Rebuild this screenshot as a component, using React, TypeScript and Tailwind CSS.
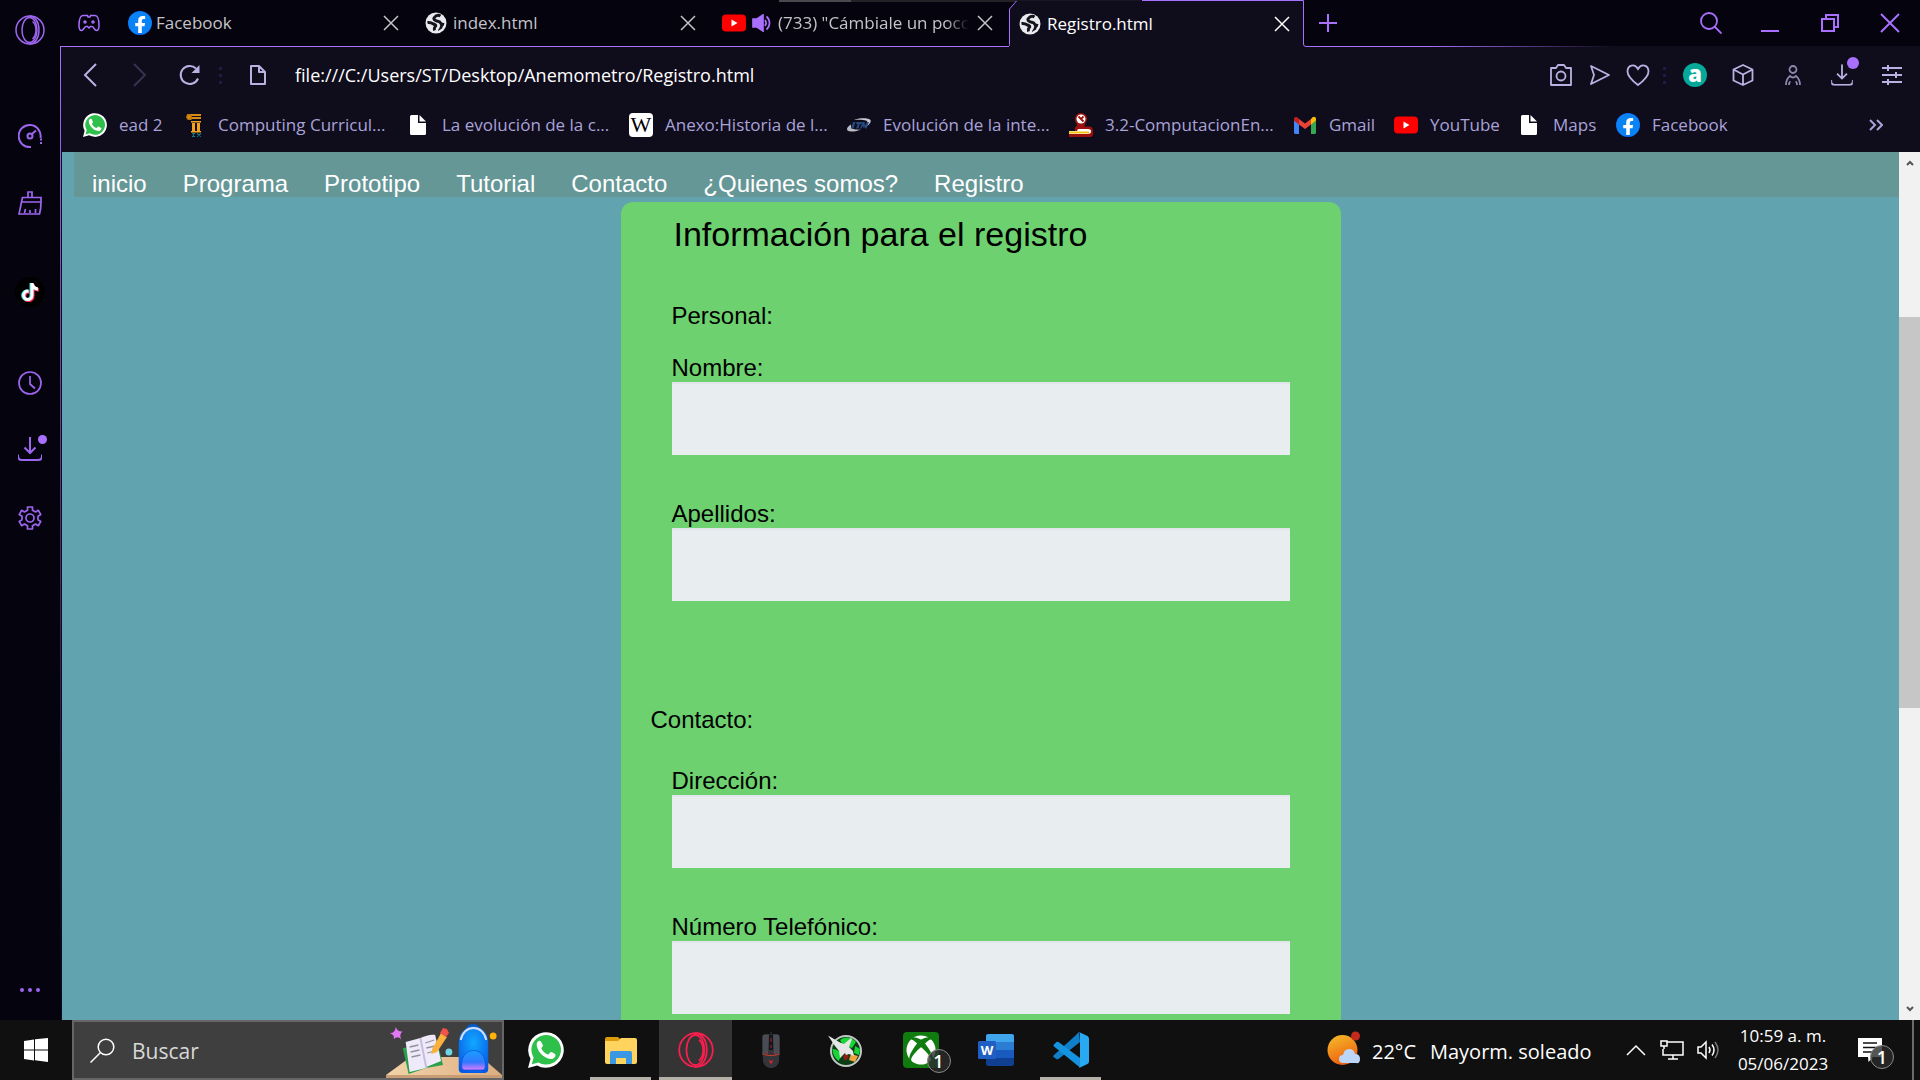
import React from "react";
import { FaFacebook, FaTiktok, FaXbox } from "react-icons/fa";

type IconProps = { className?: string };

function Line({ className = "", children, w = 24, h = 24, sw = 2 }: { className?: string; children: React.ReactNode; w?: number; h?: number; sw?: number }) {
  return (
    <svg width={w} height={h} viewBox={`0 0 ${w} ${h}`} fill="none" stroke="currentColor" strokeWidth={sw} className={`shrink-0 ${className}`} aria-hidden="true">
      {children}
    </svg>
  );
}

/* ---------- site icons ---------- */

function FacebookIcon() {
  return (
    <span className="grid size-6 shrink-0 place-items-center rounded-full bg-[radial-gradient(circle,#ffffff_60%,#0866ff_62%)]">
      <FaFacebook className="size-6 text-[#0a84f5]" />
    </span>
  );
}

function GlobeIcon() {
  return (
    <svg width="22" height="22" viewBox="0 0 22 22" className="shrink-0" aria-hidden="true">
      <circle cx="11" cy="11" r="10.500" fill="#e8eaed" />
      <path d="M10 4.500c2-1.500 4-1.500 5.500-.5M10.500 4.500C8 6 8.500 7.500 10.500 8.500s4.500.5 5 2.500c.5 1.500 2 1 3.500 1.500M2.500 10.500c3-.5 4.500.5 6 1.500 2.500 1 3 1.500 1.500 3-1 1-1 2-.5 3.500" fill="none" stroke="#15131c" strokeWidth="3" strokeLinejoin="round" />
      <path d="M15 12l4-.5-2 5-4 2.500c0-2 3-4 2-7z" fill="#15131c" />
    </svg>
  );
}

function YoutubeIcon() {
  return (
    <svg width="24" height="24" viewBox="0 0 24 24" className="shrink-0" aria-hidden="true">
      <rect x="0" y="3.500" width="24" height="17" rx="4" fill="#ff0000" />
      <path d="M9.500 8.500v7l6-3.500z" fill="#fff" />
    </svg>
  );
}

function WhatsappIcon({ size = "size-6" }: { size?: string }) {
  return (
    <span className={`relative grid shrink-0 place-items-center ${size}`}>
      <svg viewBox="0 0 36 36" className="size-full" aria-hidden="true">
        <path d="M0 36l2.500-9.200A17.800 17.800 0 1 1 9.200 33.500z" fill="#fff" />
        <path d="M3.800 32.200l1.800-6.600A14.800 14.800 0 1 1 10.400 30.400z" fill="#2fc04c" />
        <path d="M13 9.500c-.6-.9-1.300-.9-2-.7-1.500.6-2.700 2.500-2.200 5.200 1 5.500 7 12.500 14 13 3 0 4.800-1.800 4.700-4.300-.2-.8-4-2.700-4.800-2.600-.8.200-1.700 2.300-2.400 2.400-2.500-.3-6.200-3.800-6.900-6.300.2-.8 1.700-1.700 1.600-2.600z" fill="#fff" />
      </svg>
    </span>
  );
}

function PageIcon() {
  return (
    <svg width="24" height="24" viewBox="0 0 24 24" className="shrink-0" aria-hidden="true">
      <path d="M4 3.500a1.500 1.500 0 0 1 1.500-1.500H12v8h8v10.500a1.500 1.500 0 0 1-1.500 1.500h-13A1.500 1.500 0 0 1 4 20.500zM13.500 2L20 8.500h-6.500z" fill="#fff" />
    </svg>
  );
}

function ColumnIcon() {
  return (
    <svg width="24" height="24" viewBox="0 0 24 24" className="shrink-0" aria-hidden="true">
      <path d="M5 1h14v2H9v1h10v2H10l-1 1H6L5 5z" fill="#d98a10" />
      <circle cx="7" cy="4" r="2.500" fill="none" stroke="#b36b08" strokeWidth="1" />
      <path d="M9 8h10v1.500H9zM10 10h3v8h-3zM15 10h3v8h-3zM9 18h10v1.500H9z" fill="#f5a31a" />
      <path d="M10 20.500h3M11.500 20.500v3M10 23.500h3M15 20.500l4 3M19 20.500l-4 3" stroke="#0f7f86" strokeWidth="1.200" />
    </svg>
  );
}

function WikipediaIcon() {
  return <span className="grid size-6 shrink-0 place-items-center rounded bg-white font-['Liberation_Serif',serif] text-[22px] leading-6 text-black">W</span>;
}

function ItmIcon() {
  return (
    <svg width="24" height="24" viewBox="0 0 24 24" className="shrink-0" aria-hidden="true">
      <path d="M7 7C12 4.500 22 5 23.500 7c1 3-2.500 6-6 7.500C20 11 21.500 8.500 19 7.500 16 6.500 11 6.500 7 7z" fill="#c9cbd0" />
      <path d="M4 11.500c-3 2-5 4-3.500 6 3 2 9 1 13.500-1C9 17 4.500 16 4 14.500z" fill="#b9bcc3" />
      <path d="M6 9h2.500l-2 6.500H4zM9.500 9H15l-.5 2h-1.700l-1.300 4.500H9.200l1.300-4.500H9zM15.500 9h2l.5 3.500L20 9h2l-2.500 6.500H18l.5-3-1.500 2h-1l-.5-2-1 3h-1.500z" fill="#254a80" />
    </svg>
  );
}

function StampIcon() {
  return (
    <svg width="24" height="24" viewBox="0 0 24 24" className="shrink-0" aria-hidden="true">
      <path d="M11.500 0c4.500 0 7 3 6.500 6.500-.5 3-2.500 4-2.500 7h5c2.500 0 3.500 2 3.500 4.500v3c0 2-1 3-3 3H0v-5h6V14.500l2-2c0-2-2-3.500-2-6C6 3 8 0 11.500 0z" fill="#9c100f" />
      <circle cx="12" cy="6" r="4.500" fill="#fff" />
      <path d="M9 16h10c2.500 0 3 1 3 2.500S21 21 19 21H0v-3h8z" fill="#fff" />
      <path d="M9.500 3.500l5 5M14.500 3.500L12 6" stroke="#9c100f" strokeWidth="1.800" />
      <path d="M0 19.500h20" stroke="#f4c20d" strokeWidth="2" />
    </svg>
  );
}

function GmailIcon() {
  return (
    <svg width="24" height="24" viewBox="0 0 24 24" className="shrink-0" aria-hidden="true">
      <path d="M1 7v12.500c0 .8.700 1.500 1.500 1.500H6V11z" fill="#4285f4" />
      <path d="M18 11v10h3.500c.8 0 1.500-.7 1.500-1.500V7z" fill="#34a853" />
      <path d="M18 6v5.500l5-4V6c0-2.200-2-3-3.500-1.800z" fill="#fbbc04" />
      <path d="M6 11.500V6l6 4.500L18 6v5.500L12 16z" fill="#ea4335" />
      <path d="M1 6v1.500l5 4V6L4.500 4.500C3 3.300 1 4 1 6z" fill="#c5221f" />
    </svg>
  );
}

/* ---------- browser outline icons ---------- */

function OperaIcon({ className = "" }: IconProps) {
  return (
    <svg viewBox="0 0 30 30" fill="none" stroke="currentColor" strokeWidth="1.500" className={`shrink-0 ${className}`} aria-hidden="true">
      <circle cx="15" cy="15" r="14" />
      <ellipse cx="14.500" cy="15" rx="7.500" ry="12.500" />
      <path d="M14 1c6 0 10 6 10 14s-4 14-10 14M17.500 6.500c2.500 2 3.500 5 3.500 8.500s-1 6.500-3.500 9" />
    </svg>
  );
}

function DownloadIcon({ className = "" }: IconProps) {
  return (
    <Line className={className}>
      <path d="M12 0v16M6.500 10.500L12 16l5.500-5.500M0 17.500v1.500c0 3 2 4 4 4h16c2 0 4-1 4-4v-1.500" />
    </Line>
  );
}

function CloseIcon({ className = "" }: IconProps) {
  return (
    <Line w={16} h={16} sw={1.5} className={className}>
      <path d="M1 1l14 14M15 1L1 15" />
    </Line>
  );
}

function Dots() {
  return (
    <span className="flex w-[3px] shrink-0 flex-col gap-1" aria-hidden="true">
      <i className="size-[3px] bg-[#211a45]" />
      <i className="size-[3px] bg-[#211a45]" />
      <i className="size-[3px] bg-[#211a45]" />
    </span>
  );
}

function Sidebar() {
  return (
    <aside className="flex w-[60px] shrink-0 flex-col items-center bg-[#05030d] pt-[15px] text-[#9d66f0]">
      <button aria-label="Opera GX"><OperaIcon className="size-[30px]" /></button>
      <button aria-label="GX Control" className="mt-[79px]">
        <Line>
          <path d="M13 23A11 11 0 1 1 22.500 14" />
          <circle cx="12" cy="12" r="2.500" />
          <path d="M14 10l4-3.500M22 15.500h2M22 19h2" />
        </Line>
      </button>
      <button aria-label="GX Cleaner" className="mt-[43px]">
        <Line sw={1.7}>
          <path d="M10 6.500V1h4v5.500M4.500 6.500h18.500v4.500H3.500zM3.500 11L1 23h20.500q1.500-5 1.500-12M6.500 22l1-4M12 22v-3M17.500 22v-4" />
        </Line>
      </button>
      <button aria-label="TikTok" className="mt-[62px] grid size-[30px] place-items-center rounded-full bg-black">
        <FaTiktok className="size-[18px] text-white [filter:drop-shadow(-1px_0_0_#22e6e0)_drop-shadow(1px_1px_0_#ff2850)]" />
      </button>
      <button aria-label="Historial" className="mt-[64px]">
        <Line sw={1.7}><circle cx="12" cy="12" r="11" /><path d="M12 5v8l5 4.500" /></Line>
      </button>
      <button aria-label="Descargas" className="relative mt-[42px]">
        <DownloadIcon />
        <i className="absolute -top-[2px] -right-[5px] size-[9px] rounded-full bg-[#a970ff]" />
      </button>
      <button aria-label="Configuración" className="mt-[45px]">
        <Line sw={1.7}>
          <circle cx="12" cy="12" r="4" />
          <path d="M9.500 1h5v3.200l3 1.700 2.800-1.600 2.500 4.300L20 10.300v3.400l2.800 1.700-2.500 4.300-2.800-1.600-3 1.700V23h-5v-3.200l-3-1.700-2.800 1.600-2.500-4.300L4 13.700v-3.400L1.200 8.600l2.500-4.300 2.800 1.600 3-1.700z" strokeLinejoin="round" />
        </Line>
      </button>
      <button aria-label="Más" className="mt-auto mb-7 flex gap-1">
        <i className="size-1 rounded-full bg-current" />
        <i className="size-1 rounded-full bg-current" />
        <i className="size-1 rounded-full bg-current" />
      </button>
    </aside>
  );
}

function Tab({ title, icon, audio, active }: { title: string; icon: React.ReactNode; audio?: boolean; active?: boolean }) {
  return (
    <div className={`relative flex w-[297px] shrink-0 items-center pr-4 pl-[10px] ${active ? "text-white" : "border-b border-[#a970ff] text-[#c4c3c9]"}`}>
      {active && (
        <svg className="absolute inset-0 size-full" viewBox="0 0 297 47" preserveAspectRatio="none" fill="none" aria-hidden="true">
          <path d="M.5 47V9l8-8.500h286.500V47z" fill="#0f0c1c" />
          <path d="M-1 46.500q1.500 0 1.500-2V9l7-8M133 .5h161.500V44q0 2.500 2.500 2.500" stroke="#a970ff" />
        </svg>
      )}
      <span className="relative flex w-6 shrink-0">{icon}</span>
      {audio && (
        <svg width="20" height="18" viewBox="0 0 20 18" className="ml-[6px] shrink-0" fill="none" stroke="#a970ff" strokeWidth="1.700" aria-hidden="true">
          <path d="M1 5h4l6-4v16l-6-4H1z" fill="#a970ff" />
          <path d="M13 6c1.500 2 1.500 4 0 6M14.500 2.500c4 3.500 4 9.500 0 13" />
        </svg>
      )}
      <button className={`relative min-w-0 flex-1 overflow-hidden text-left whitespace-nowrap ${audio ? "ml-[6px] [mask-image:linear-gradient(to_right,#000_88%,transparent)]" : "ml-1"}`}>{title}</button>
      <button aria-label={`Cerrar ${title}`} className="relative ml-2"><CloseIcon /></button>
    </div>
  );
}

function TabBar() {
  return (
    <div className="relative flex h-[47px] shrink-0 bg-[#05030d] text-[17px]">
      <div className="absolute top-0 left-[719px] flex h-[2px] w-[362px]"><i className="w-[72px] bg-[#4a494d]" /><i className="flex-1 bg-[#222126]" /></div>
      <div className="flex w-[58px] shrink-0 items-center border-b border-[#a970ff] pl-[18px] text-[#a970ff]">
        <button aria-label="GX Corner">
          <Line w={22} h={18} sw={1.5}>
            <path d="M5 1.500h4.500L10 3h2l.5-1.500H17c3 0 4 5 4 10 0 3-1 5-2.500 5-2 0-3-4-4.500-4h-1.500L11 14l-1.500-1.500H8c-1.500 0-2.500 4-4.500 4-1.500 0-2.500-2-2.500-5 0-5 1-10 4-10z" />
            <circle cx="7" cy="8" r="1" /><circle cx="15" cy="8" r="1" />
          </Line>
        </button>
      </div>
      <Tab title="Facebook" icon={<FacebookIcon />} />
      <Tab title="index.html" icon={<GlobeIcon />} />
      <Tab title={'(733) "Cámbiale un poco'} icon={<YoutubeIcon />} audio />
      <Tab title="Registro.html" icon={<GlobeIcon />} active />
      <div className="flex flex-1 items-center border-b border-transparent text-[#a970ff] [border-image:linear-gradient(to_right,#a970ff_20%,#0f0c1c_50%)_1]">
        <button aria-label="Nueva pestaña" className="ml-[13px]"><Line w={18} h={18}><path d="M9 0v18M0 9h18" /></Line></button>
        <button aria-label="Buscar pestañas" className="mr-[39px] ml-auto"><Line w={22} h={22} sw={1.8}><circle cx="9" cy="9" r="8" /><path d="M14.500 14.500l7 7" /></Line></button>
        <button aria-label="Minimizar" className="mr-[41px] pt-4"><Line w={18} h={2}><path d="M0 1h18" /></Line></button>
        <button aria-label="Restaurar" className="mr-[40px]"><Line w={20} h={20}><path d="M2 6h12v12H2zM6 6V2h12v12h-4" /></Line></button>
        <button aria-label="Cerrar" className="mr-[20px]"><Line w={20} h={20}><path d="M1 1l18 18M19 1L1 19" /></Line></button>
      </div>
    </div>
  );
}

function AddressBar() {
  return (
    <div className="flex h-14 shrink-0 items-center pr-[18px] pl-[22px] text-[#b8b2e2]">
      <button aria-label="Atrás"><Line w={14} h={24}><path d="M13 1L2 12l11 11" /></Line></button>
      <button aria-label="Adelante" className="ml-[36px] text-[#37334f]"><Line w={14} h={24}><path d="M1 1l11 11L1 23" /></Line></button>
      <button aria-label="Recargar" className="ml-[32px]">
        <Line w={22} h={22}><path d="M19 14.500A9 9 0 1 1 17 4.500" /><path d="M20.500 1v8h-8z" fill="currentColor" stroke="none" /></Line>
      </button>
      <span className="ml-[18px]"><Dots /></span>
      <span className="ml-[27px]"><Line w={18} h={22}><path d="M2 2h8l6 6v12H2zM10 2v6h6" strokeLinejoin="round" /></Line></span>
      <input aria-label="Dirección" defaultValue="file:///C:/Users/ST/Desktop/Anemometro/Registro.html" className="ml-[28px] min-w-0 flex-1 bg-transparent text-lg text-white outline-none" />
      <button aria-label="Instantánea"><Line w={24} h={24} sw={1.8}><path d="M2 5h5l2-3h6l2 3h5v17H2z" strokeLinejoin="round" /><circle cx="12" cy="13" r="4.500" /></Line></button>
      <button aria-label="Mi Flow" className="ml-4"><Line w={22} h={22} sw={1.8}><path d="M2 2l18 9-18 9 3-9z" strokeLinejoin="round" /></Line></button>
      <button aria-label="Marcadores" className="ml-[15px]"><Line w={24} h={24} sw={1.8}><path d="M12 22C8 19 1.500 14 1.500 8.500 1.500 2 8.500 0 12 6c3.500-6 10.500-4 10.500 2.500C22.500 14 16 19 12 22z" /></Line></button>
      <span className="ml-[13px]"><Dots /></span>
      <button aria-label="Alexa" className="ml-[17px] grid size-6 place-items-center rounded-full bg-[#05a899] text-[22px] leading-5 font-extrabold text-white"><span className="-mt-1">a</span></button>
      <button aria-label="Extensiones" className="ml-6"><Line w={24} h={24} sw={1.8}><path d="M12 2l9.500 4.500v11L12 22l-9.500-4.500v-11zM2.500 6.500L12 11.500l9.500-5M12 11.500V22" strokeLinejoin="round" /></Line></button>
      <button aria-label="Perfil" className="ml-[29px] text-[#8d88ae]"><Line w={18} h={20} sw={1.8}><circle cx="9" cy="4.500" r="3.500" /><path d="M2 20c0-5 1.500-7 4-9 2 2 4 2 6 0 2.500 2 4 4 4 9M5 20q0-3 1.500-3.500M13 20q0-3-1.500-3.500" /></Line></button>
      <button aria-label="Descargas" className="relative ml-[28px]">
        <DownloadIcon className="scale-90" />
        <i className="absolute -top-[6px] -right-[5px] size-3 rounded-full bg-[#a970ff]" />
      </button>
      <button aria-label="Configuración rápida" className="ml-[28px]"><Line w={20} h={20}><path d="M0 3h20M0 10h20M0 17h20M6 0v6M14 7v6M6 14v6" /></Line></button>
    </div>
  );
}

const bookmarks: { label: string; icon: React.ReactNode; width: string }[] = [
  { label: "ead 2", icon: <WhatsappIcon />, width: "w-[99px]" },
  { label: "Computing Curricul...", icon: <ColumnIcon />, width: "w-[224px]" },
  { label: "La evolución de la c...", icon: <PageIcon />, width: "w-[223px]" },
  { label: "Anexo:Historia de l...", icon: <WikipediaIcon />, width: "w-[218px]" },
  { label: "Evolución de la inte...", icon: <ItmIcon />, width: "w-[222px]" },
  { label: "3.2-ComputacionEn...", icon: <StampIcon />, width: "w-[224px]" },
  { label: "Gmail", icon: <GmailIcon />, width: "w-[101px]" },
  { label: "YouTube", icon: <YoutubeIcon />, width: "w-[123px]" },
  { label: "Maps", icon: <PageIcon />, width: "w-[99px]" },
  { label: "Facebook", icon: <FacebookIcon />, width: "w-[120px]" },
];

function BookmarksBar() {
  return (
    <nav aria-label="Marcadores" className="flex h-[49px] shrink-0 items-center pb-[6px] pl-[22px] text-[17px] text-[#a9a3d8]">
      {bookmarks.map((b) => (
        <a key={b.label} href="#" className={`flex shrink-0 items-center gap-3 whitespace-nowrap ${b.width}`}>
          {b.icon}
          {b.label}
        </a>
      ))}
      <button aria-label="Más marcadores" className="mr-[37px] ml-auto"><Line w={14} h={12}><path d="M1 1l5 5-5 5M8 1l5 5-5 5" /></Line></button>
    </nav>
  );
}

function Field({ id, label, className }: { id: string; label: string; className: string }) {
  return (
    <div className={`ml-[51px] flex flex-col ${className}`}>
      <label htmlFor={id}>{label}</label>
      <input id={id} type="text" className="mr-[51px] h-[73px] border-t-2 border-[#e2e5ea] bg-[#e8edf0] px-4 outline-none" />
    </div>
  );
}

function RegistroPage() {
  const links = ["inicio", "Programa", "Prototipo", "Tutorial", "Contacto", "¿Quienes somos?", "Registro"];
  return (
    <main className="min-w-0 flex-1 overflow-hidden bg-[#61a3ae] font-['Liberation_Sans',Arial,sans-serif] text-2xl leading-7">
      <nav className="ml-3 flex h-[45px] items-end gap-9 bg-[#659797] pl-[18px] text-white">
        {links.map((l) => <a key={l} href="#" className="-mb-px">{l}</a>)}
      </nav>
      <form className="mx-auto mt-[5px] w-[720px] rounded-t-xl bg-[#6dd170] pt-3 pb-16 text-black">
        <h1 className="pl-[53px] text-[34px] leading-10">Información para el registro</h1>
        <h2 className="mt-12 pl-[51px]">Personal:</h2>
        <Field id="nombre" label="Nombre:" className="mt-6" />
        <Field id="apellidos" label="Apellidos:" className="mt-[45px]" />
        <h2 className="mt-[105px] pl-[30px]">Contacto:</h2>
        <Field id="direccion" label="Dirección:" className="mt-[33px]" />
        <Field id="telefono" label="Número Telefónico:" className="mt-[45px]" />
      </form>
    </main>
  );
}

function Scrollbar() {
  return (
    <div className="flex w-[21px] shrink-0 flex-col items-center bg-[#f1f1f1] py-2 text-[#555]">
      <Line w={8} h={6}><path d="M1 5l3-3 3 3" /></Line>
      <div className="mt-[151px] h-[391px] w-full bg-[#c6c6c6]" />
      <Line w={8} h={6} className="mt-auto"><path d="M1 1l3 3 3-3" /></Line>
    </div>
  );
}

/* ---------- taskbar ---------- */

function SearchArt() {
  return (
    <svg width="116" height="58" viewBox="0 0 118 58" preserveAspectRatio="none" className="shrink-0" aria-hidden="true">
      <defs>
        <linearGradient id="desk" x1="0" x2="1"><stop offset="0" stopColor="#f3d3aa" /><stop offset="1" stopColor="#dcae80" /></linearGradient>
        <radialGradient id="bag" cx=".5" cy=".35" r=".7"><stop offset="0" stopColor="#12a8ff" /><stop offset="1" stopColor="#0559e6" /></radialGradient>
        <linearGradient id="pocket" x1="0" x2="0" y1="0" y2="1"><stop offset="0" stopColor="#199fff" /><stop offset=".6" stopColor="#3178ff" /><stop offset="1" stopColor="#e07bff" /></linearGradient>
      </defs>
      <path d="M25 36h72l21 18H0z" fill="url(#desk)" />
      <path d="M0 54h118v4H0z" fill="#c89c74" />
      <path d="M10 6q1.500 5 7 4.500-4 2.500-1.500 8Q12 14.500 8 18q1-4-4-6 5 .5 6-6z" fill="#e277f5" />
      <path d="M17 27l6 26 18-6 17-3-5-20z" fill="#2aa04a" />
      <path d="M20 21l15-4 6 30-17 4zM35 17c5-2 11-4 15-3l6 26-15 6z" fill="#efeafa" />
      <path d="M24 26l9-2M25 31l9-2M26 36l9-2M40 22l9-3M41 27l9-2M42 32l7-2" stroke="#93909f" strokeWidth="1.300" />
      <path d="M35 17l6 30" stroke="#c6bddb" strokeWidth="2" />
      <path d="M47 28L56 12l6 4-10 15-6 2z" fill="#f8b13a" />
      <path d="M55 12l3-5 4 1 2 4-3 4z" fill="#f25348" />
      <circle cx="64" cy="31" r="3.500" fill="#70d5e3" />
      <circle cx="109" cy="15" r="3.500" fill="#ffb20a" />
      <path d="M83 8c0-5 11-5 11 0" stroke="#0756b9" strokeWidth="3" fill="none" />
      <path d="M74 22c0-22 30-22 30 0v26q0 4-4 4H78q-4 0-4-4z" fill="url(#bag)" />
      <path d="M76 19c3-16 23-16 26 0" stroke="#d5ddff" strokeWidth="2" fill="none" />
      <path d="M77 43c0-18 24-18 24 0v3q0 3-3 3H80q-3 0-3-3z" fill="url(#pocket)" stroke="#0750d8" strokeWidth=".7" />
    </svg>
  );
}

function FolderIcon() {
  return (
    <svg width="34" height="34" viewBox="0 0 34 34" aria-hidden="true">
      <path d="M1 6q0-2 2-2h11l3 3v4H1z" fill="#dc9b0b" />
      <path d="M1 8h13l3-3h14q2 0 2 2v22q0 2-2 2H3q-2 0-2-2z" fill="#ffd45e" />
      <path d="M6 31V20q0-2 2-2h18q2 0 2 2v11h-6v-6H12v6z" fill="#3997e3" />
    </svg>
  );
}

function MouseIcon() {
  return (
    <svg width="22" height="36" viewBox="0 0 22 36" aria-hidden="true">
      <path d="M11 0v3" stroke="#2a2a2e" strokeWidth="1.500" />
      <path d="M5 2.500h12c2 0 2.500 1 2.500 3v15l-.5 9c-1 4-4 6.500-8 6.500s-7-2.500-8-6.500l-.5-9v-15c0-2 .5-3 2.500-3z" fill="#33353b" />
      <path d="M5 2.500h4l-1 18-5.500 2v-17c0-2 .5-3 2.500-3zM17 2.500h-4l1 18 5.500 2v-17c0-2-.5-3-2.500-3z" fill="#4a4c53" />
      <path d="M11 3v15" stroke="#15151a" strokeWidth="4" />
      <path d="M11 6v4M11 13v3" stroke="#7a2224" strokeWidth="1.500" />
      <path d="M2.500 22l5.500 1.500h6l5.500-1.500M6 23l2-3M16 23l-2-3" stroke="#c0392f" fill="none" />
      <path d="M8.500 28l2.500 1 2.500-1-2.500 4.500z" fill="#d92525" />
    </svg>
  );
}

function JetIcon() {
  return (
    <svg width="36" height="36" viewBox="0 0 36 36" aria-hidden="true">
      <circle cx="18" cy="19" r="15" fill="#0b3d16" stroke="#c3c7c4" strokeWidth="2" />
      <path d="M12 8c5-4 12-3 16 2l-4 6-9-3zM4.500 17c5 0 8 3 9 7l-3 5c-4-3-6-7-6-12zM27 14l5 3-1 6-5-2z" fill="#19d636" />
      <path d="M23 22l7 2-3 6-6-2z" fill="#f0a541" /><path d="M15 24l4-3 2 4-4 4z" fill="#8f1f16" />
      <path d="M0 3.500l12 7 4 1.500 7-6 1 1-3 8 4 4 1 5-5-2-3 1-1-2-5 5-1-7-4-5z" fill="#e6e6e6" />
    </svg>
  );
}

function WordIcon() {
  return (
    <svg width="36" height="32" viewBox="0 0 36 32" aria-hidden="true">
      <path d="M8 2q0-2 2-2h24q2 0 2 2v6H8z" fill="#41a5ee" />
      <path d="M8 8h28v8H8z" fill="#2b7cd3" />
      <path d="M8 16h28v8H8z" fill="#185abd" />
      <path d="M8 24h28v6q0 2-2 2H10q-2 0-2-2z" fill="#103f91" />
      <rect y="7" width="18" height="18" rx="1.500" fill="#1f5fc4" />
      <text x="9" y="21" textAnchor="middle" fontSize="13" fontWeight="700" fontFamily="Open Sans, sans-serif" fill="#fff">W</text>
    </svg>
  );
}

function CodeIcon() {
  return (
    <svg width="36" height="36" viewBox="0 0 36 36" aria-hidden="true">
      <path d="M26 0l-4 4L1 23c-1 1-1 1.500 0 2.500L3.500 27q1 .7 2 0L27 10z" fill="#0f7fc9" />
      <path d="M1 12.500L3.500 10q1-.7 2 0L27 26v9.500L1 14.500q-1-1 0-2z" fill="#1593de" />
      <path d="M26 0l8.500 4q1.500 1 1.500 2.500v23q0 1.500-1.500 2.500L26 36q1-1 1-3V3q0-2-1-3z" fill="#2aa9f3" />
    </svg>
  );
}

function Badge() {
  return <span className="absolute -right-3 -bottom-[5px] grid size-6 place-items-center rounded-full border border-[#8a8a8a] bg-[#2b2b2bcc] text-lg leading-none font-semibold text-white">1</span>;
}

function Taskbar() {
  const apps: { name: string; icon: React.ReactNode; open?: boolean; focused?: boolean }[] = [
    { name: "WhatsApp", icon: <WhatsappIcon size="size-9" /> },
    { name: "Explorador de archivos", icon: <FolderIcon />, open: true },
    { name: "Opera GX", icon: <OperaIcon className="size-9 text-[#fa1e4e]" />, open: true, focused: true },
    { name: "Mouse", icon: <MouseIcon /> },
    { name: "Afterburner", icon: <JetIcon /> },
    {
      name: "Xbox",
      icon: <span className="relative grid size-9 place-items-center rounded-sm bg-[#107c10]"><FaXbox className="size-[30px] text-white" /><Badge /></span>,
    },
    { name: "Word", icon: <WordIcon /> },
    { name: "Visual Studio Code", icon: <CodeIcon />, open: true },
  ];
  return (
    <footer className="flex h-[60px] shrink-0 items-stretch bg-[#101010] text-white">
      <button aria-label="Inicio" className="grid w-[72px] shrink-0 place-items-center">
        <svg width="24" height="24" viewBox="0 0 24 24" fill="#fff" aria-hidden="true"><path d="M0 3l10-1.500V11.500H0zM11 1.300L24 0v11.500H11zM0 12.500h10v10L0 21zM11 12.500h13V24l-13-1.700z" /></svg>
      </button>
      <label className="flex w-[432px] shrink-0 items-center overflow-hidden border-2 border-[#666] bg-[#3f3f3f] pl-4">
        <Line w={25} h={25} sw={1.5}><circle cx="16" cy="9" r="7.800" /><path d="M10.500 14.500L.5 24.500" /></Line>
        <input aria-label="Buscar" placeholder="Buscar" className="ml-[17px] min-w-0 flex-1 bg-transparent pt-1 text-[21px] outline-none placeholder:text-[#d8d8d8]" />
        <SearchArt />
      </label>
      <div className="ml-1 flex">
        {apps.map((a) => (
          <button key={a.name} aria-label={a.name} className="relative grid w-[75px] place-items-center">
            {a.focused && <i className="absolute inset-y-0 inset-x-px bg-[#343434]" />}
            <span className="relative">{a.icon}</span>
            {a.open && <i className={`absolute bottom-0 h-[3px] bg-[#b3b1a8] ${a.focused ? "inset-x-px" : "inset-x-[7px]"}`} />}
          </button>
        ))}
      </div>
      <button className="ml-auto flex items-center pt-1 text-xl whitespace-nowrap">
        <svg width="34" height="42" viewBox="0 0 34 42" className="mb-1" aria-hidden="true">
          <defs><linearGradient id="sun" x1="0" x2="0.400" y2="1"><stop offset="0" stopColor="#f3c02b" /><stop offset="1" stopColor="#f0600f" /></linearGradient></defs>
          <circle cx="15.500" cy="21" r="15" fill="url(#sun)" />
          <path d="M16 34q-4 0-4-4t4-4q1-6 6-6t6 5q5 0 5 5t-4 4z" fill="#bcd6fa" />
          <circle cx="28.500" cy="7" r="4.500" fill="#c42b1c" />
        </svg>
        <span className="ml-[11px]">22°C</span>
        <span className="ml-[14px] w-[160px] text-left">Mayorm. soleado</span>
      </button>
      <button aria-label="Iconos ocultos" className="ml-[36px]"><Line w={20} h={12} sw={1.5}><path d="M1 11l9-9 9 9" /></Line></button>
      <button aria-label="Red" className="ml-[14px]">
        <Line w={24} h={20} sw={1.5}><path d="M7 2h16v13H3V9M1 1h6v5H1zM4 6v3M13 15v4M8 19h10" /></Line>
      </button>
      <button aria-label="Volumen" className="ml-[13px]">
        <Line w={23} h={20} sw={1.5}><path d="M1 7h3l5-5v16l-5-5H1zM12 7q2 3 0 6M15 4.500q4 5.500 0 11" /><path d="M18 2q6 8 0 16" stroke="#777" /></Line>
      </button>
      <button className="ml-3 flex w-[102px] flex-col items-center justify-center gap-1 text-[17px] leading-6 whitespace-nowrap">
        <span>10:59 a. m.</span>
        <span>05/06/2023</span>
      </button>
      <button aria-label="Notificaciones" className="relative ml-6 self-center">
        <svg width="24" height="28" viewBox="0 0 24 28" aria-hidden="true"><path d="M0 2h24v19H15l-4.500 5-.5-5H0z" fill="#fff" /><path d="M5 7h14M5 11.500h14M5 16h9" stroke="#101010" strokeWidth="1.500" /></svg>
        <Badge />
      </button>
      <i className="ml-[30px] w-[2px] bg-[#6a6a6a]" />
      <i className="w-[6px]" />
    </footer>
  );
}

export default function App() {
  return (
    <div className="flex h-screen flex-col overflow-hidden font-['Open_Sans','Noto_Sans',sans-serif]">
      <div className="flex min-h-0 flex-1 bg-[#0f0c1c]">
        <Sidebar />
        <div className="flex min-w-0 flex-1 flex-col">
          <TabBar />
          <div className="flex min-h-0 flex-1">
            <i className="w-px shrink-0 bg-linear-to-b from-[#a970ff] to-[#05030d]" />
            <div className="flex min-w-0 flex-1 flex-col">
              <AddressBar />
              <BookmarksBar />
              <div className="ml-px flex min-h-0 flex-1">
                <RegistroPage />
                <Scrollbar />
              </div>
            </div>
          </div>
        </div>
      </div>
      <Taskbar />
    </div>
  );
}
